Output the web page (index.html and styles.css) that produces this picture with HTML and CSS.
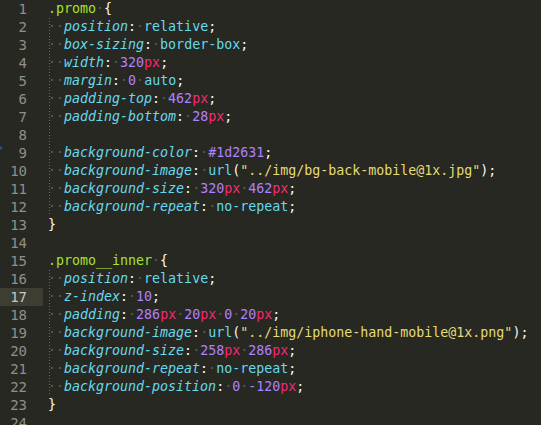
FILE: index.html
```html
<!DOCTYPE html>
<html>
<head>
<meta charset="utf-8">
<link rel="stylesheet" href="styles.css">
</head>
<body>
<div class="editor">
<div class="ln"><span class="num">1</span><span class="code"><span class="s">.promo</span><span class="w">·</span><span class="o">{</span></span></div>
<div class="ln"><span class="num">2</span><span class="code"><span class="ind">··</span><span class="p">position</span><span class="o">:</span><span class="w">·</span><span class="k">relative</span><span class="o">;</span></span></div>
<div class="ln"><span class="num">3</span><span class="code"><span class="ind">··</span><span class="p">box-sizing</span><span class="o">:</span><span class="w">·</span><span class="k">border-box</span><span class="o">;</span></span></div>
<div class="ln"><span class="num">4</span><span class="code"><span class="ind">··</span><span class="p">width</span><span class="o">:</span><span class="w">·</span><span class="n">320</span><span class="u">px</span><span class="o">;</span></span></div>
<div class="ln"><span class="num">5</span><span class="code"><span class="ind">··</span><span class="p">margin</span><span class="o">:</span><span class="w">·</span><span class="n">0</span><span class="w">·</span><span class="k">auto</span><span class="o">;</span></span></div>
<div class="ln"><span class="num">6</span><span class="code"><span class="ind">··</span><span class="p">padding-top</span><span class="o">:</span><span class="w">·</span><span class="n">462</span><span class="u">px</span><span class="o">;</span></span></div>
<div class="ln"><span class="num">7</span><span class="code"><span class="ind">··</span><span class="p">padding-bottom</span><span class="o">:</span><span class="w">·</span><span class="n">28</span><span class="u">px</span><span class="o">;</span></span></div>
<div class="ln"><span class="num">8</span><span class="code"><span class="ind"><span class="blank">··</span></span></span></div>
<div class="ln"><span class="num mark">9</span><span class="code"><span class="ind">··</span><span class="p">background-color</span><span class="o">:</span><span class="w">·</span><span class="n">#1d2631</span><span class="o">;</span></span></div>
<div class="ln"><span class="num">10</span><span class="code"><span class="ind">··</span><span class="p">background-image</span><span class="o">:</span><span class="w">·</span><span class="k">url</span><span class="o">(</span><span class="q">"../img/bg-back-mobile@1x.jpg"</span><span class="o">);</span></span></div>
<div class="ln"><span class="num">11</span><span class="code"><span class="ind">··</span><span class="p">background-size</span><span class="o">:</span><span class="w">·</span><span class="n">320</span><span class="u">px</span><span class="w">·</span><span class="n">462</span><span class="u">px</span><span class="o">;</span></span></div>
<div class="ln"><span class="num">12</span><span class="code"><span class="ind">··</span><span class="p">background-repeat</span><span class="o">:</span><span class="w">·</span><span class="k">no-repeat</span><span class="o">;</span></span></div>
<div class="ln"><span class="num">13</span><span class="code"><span class="o">}</span></span></div>
<div class="ln"><span class="num">14</span><span class="code"></span></div>
<div class="ln"><span class="num">15</span><span class="code"><span class="s">.promo__inner</span><span class="w">·</span><span class="o">{</span></span></div>
<div class="ln"><span class="num">16</span><span class="code"><span class="ind">··</span><span class="p">position</span><span class="o">:</span><span class="w">·</span><span class="k">relative</span><span class="o">;</span></span></div>
<div class="ln cur"><span class="num">17</span><span class="code"><span class="ind">··</span><span class="p">z-index</span><span class="o">:</span><span class="w">·</span><span class="n">10</span><span class="o">;</span></span></div>
<div class="ln"><span class="num">18</span><span class="code"><span class="ind">··</span><span class="p">padding</span><span class="o">:</span><span class="w">·</span><span class="n">286</span><span class="u">px</span><span class="w">·</span><span class="n">20</span><span class="u">px</span><span class="w">·</span><span class="n">0</span><span class="w">·</span><span class="n">20</span><span class="u">px</span><span class="o">;</span></span></div>
<div class="ln"><span class="num">19</span><span class="code"><span class="ind">··</span><span class="p">background-image</span><span class="o">:</span><span class="w">·</span><span class="k">url</span><span class="o">(</span><span class="q">"../img/iphone-hand-mobile@1x.png"</span><span class="o">);</span></span></div>
<div class="ln"><span class="num">20</span><span class="code"><span class="ind">··</span><span class="p">background-size</span><span class="o">:</span><span class="w">·</span><span class="n">258</span><span class="u">px</span><span class="w">·</span><span class="n">286</span><span class="u">px</span><span class="o">;</span></span></div>
<div class="ln"><span class="num">21</span><span class="code"><span class="ind">··</span><span class="p">background-repeat</span><span class="o">:</span><span class="w">·</span><span class="k">no-repeat</span><span class="o">;</span></span></div>
<div class="ln"><span class="num">22</span><span class="code"><span class="ind">··</span><span class="p">background-position</span><span class="o">:</span><span class="w">·</span><span class="n">0</span><span class="w">·</span><span class="n">-120</span><span class="u">px</span><span class="o">;</span></span></div>
<div class="ln"><span class="num">23</span><span class="code"><span class="o">}</span></span></div>
<div class="ln"><span class="num">24</span><span class="code"></span></div>
</div>
</body>
</html>
```

FILE: styles.css
```css
html, body {
  margin: 0;
  padding: 0;
  background: #272822;
  overflow: hidden;
}

.editor {
  font-family: "DejaVu Sans Mono", "Liberation Mono", monospace;
  font-size: 13.3px;
  line-height: 18px;
  color: #f8f8f2;
}

.ln {
  display: flex;
  height: 18px;
}

.num {
  position: relative;
  flex: 0 0 43px;
  box-sizing: border-box;
  padding-right: 16px;
  text-align: right;
  font-size: 14px;
  color: #8f908a;
}

.cur .num {
  background: #3e3d32;
  color: #c8c8c2;
}

.mark::before {
  content: "";
  position: absolute;
  left: 0;
  top: 2px;
  width: 0;
  height: 0;
  border-top: 2px solid transparent;
  border-bottom: 2px solid transparent;
  border-left: 3px solid #2c4f86;
}

.code {
  padding-left: 5px;
  display: flex;
  white-space: pre;
}

.ind {
  display: inline-block;
  height: 18px;
  color: #5b5b52;
  background-image: repeating-linear-gradient(to bottom, #6b6b62 0 1px, transparent 1px 3px);
  background-size: 1px 18px;
  background-position: 1px 0;
  background-repeat: no-repeat;
}

.blank {
  visibility: hidden;
}

.w { color: #5b5b52; }
.s { color: #a6e22e; }
.o { color: #f8f8f2; }
.p { color: #66d9ef; font-style: italic; }
.k { color: #66d9ef; }
.n { color: #ae81ff; }
.u { color: #f92672; }
.q { color: #e6db74; }
```
